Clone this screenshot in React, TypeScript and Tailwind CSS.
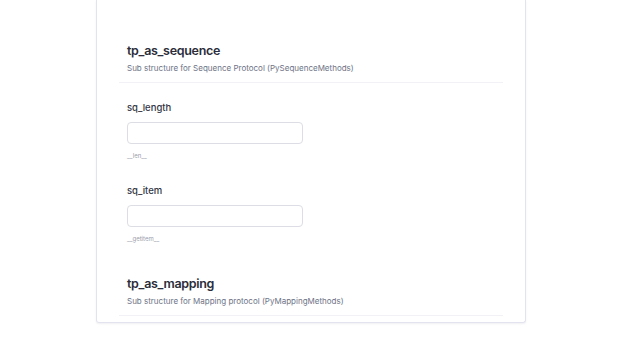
import React from 'react';

const SectionHeader: React.FC<{ title: string; sub: string }> = ({ title, sub }) => (
  <div className="px-2 pb-2 border-b border-[#f1f1f6]">
    <h2 className="text-[12.5px] leading-4 font-semibold text-[#2b2d3a] tracking-tight">{title}</h2>
    <p className="mt-[3px] text-[8px] leading-3 text-[#6e7386]">{sub}</p>
  </div>
);

const Field: React.FC<{ label: string; hint: string }> = ({ label, hint }) => (
  <div className="px-2">
    <label className="block text-[9.5px] leading-[14px] font-medium text-[#33353f]">{label}</label>
    <input
      type="text"
      className="block mt-[7px] w-[176px] h-[22px] rounded border border-[#dcdde5] bg-white outline-none"
    />
    <p className="mt-[7px] text-[6px] leading-[10px] text-[#9b9daa]">{hint}</p>
  </div>
);

export default function App() {
  return (
    <div className="w-[622px] h-[350px] bg-white overflow-hidden" style={{ fontFamily: 'Inter, "Noto Sans", sans-serif' }}>
      <div className="ml-[96px] w-[430px] border-x border-b border-[#e3e3ef] rounded-b-[3px] shadow-[0_1px_2px_rgba(60,60,100,0.08)] pl-[22px] pr-[22px] pb-[6px]">
        <div className="pt-[43px]">
          <SectionHeader title="tp_as_sequence" sub="Sub structure for Sequence Protocol (PySequenceMethods)" />
        </div>
        <div className="pt-[18px] flex flex-col gap-[23px]">
          <Field label="sq_length" hint="__len__" />
          <Field label="sq_item" hint="__getitem__" />
        </div>
        <div className="pt-[32px]">
          <SectionHeader title="tp_as_mapping" sub="Sub structure for Mapping protocol (PyMappingMethods)" />
        </div>
      </div>
    </div>
  );
}
